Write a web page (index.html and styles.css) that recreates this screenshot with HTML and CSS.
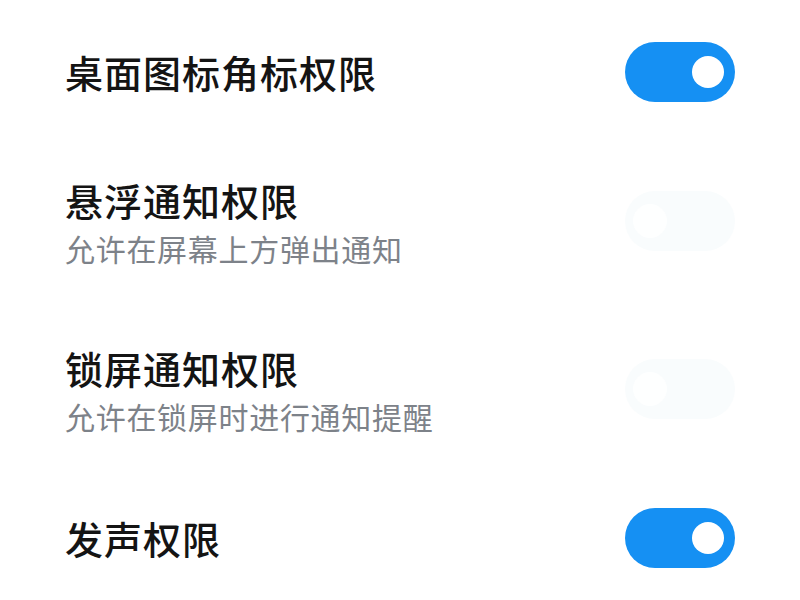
FILE: index.html
```html
<!DOCTYPE html>
<html lang="zh-CN">
<head>
<meta charset="utf-8">
<link rel="stylesheet" href="styles.css">
</head>
<body>
<div class="list">
  <div class="row">
    <div class="text"><div class="title">桌面图标角标权限</div></div>
    <div class="switch on"><span class="knob"></span></div>
  </div>
  <div class="row tall">
    <div class="text">
      <div class="title">悬浮通知权限</div>
      <div class="sub">允许在屏幕上方弹出通知</div>
    </div>
    <div class="switch off"><span class="knob"></span></div>
  </div>
  <div class="row tall">
    <div class="text">
      <div class="title">锁屏通知权限</div>
      <div class="sub">允许在锁屏时进行通知提醒</div>
    </div>
    <div class="switch off"><span class="knob"></span></div>
  </div>
  <div class="row">
    <div class="text"><div class="title">发声权限</div></div>
    <div class="switch on"><span class="knob"></span></div>
  </div>
</div>
</body>
</html>
```
FILE: styles.css
```css
html, body {
  margin: 0;
  padding: 0;
  background: #ffffff;
  overflow: hidden;
}
body {
  font-family: "Noto Sans CJK SC", "Noto Sans", sans-serif;
  color: #141414;
}
.list {
  display: flex;
  flex-direction: column;
  padding: 7px 65px 0 65px;
}
.row {
  display: flex;
  align-items: center;
  justify-content: space-between;
  padding: 35px 0;
}
.row.tall {
  padding: 36px 0;
}
.title {
  font-size: 38px;
  line-height: 54px;
  font-weight: 500;
  letter-spacing: 1px;
  color: #141414;
}
.row:not(.tall) .title {
  line-height: 58px;
}
.sub {
  font-size: 30px;
  line-height: 42px;
  letter-spacing: 0.7px;
  color: #7d8289;
}
.switch {
  width: 110px;
  height: 60px;
  border-radius: 30px;
  display: flex;
  align-items: center;
  box-sizing: border-box;
  flex: none;
}
.switch.on {
  background: #1590f3;
  justify-content: flex-end;
  padding-right: 11px;
}
.switch.off {
  background: #f9fcfd;
  justify-content: flex-start;
  padding-left: 8px;
}
.knob {
  width: 32px;
  height: 32px;
  border-radius: 50%;
  background: #ffffff;
}
.switch.off .knob {
  width: 34px;
  height: 34px;
  background: #feffff;
}
```
